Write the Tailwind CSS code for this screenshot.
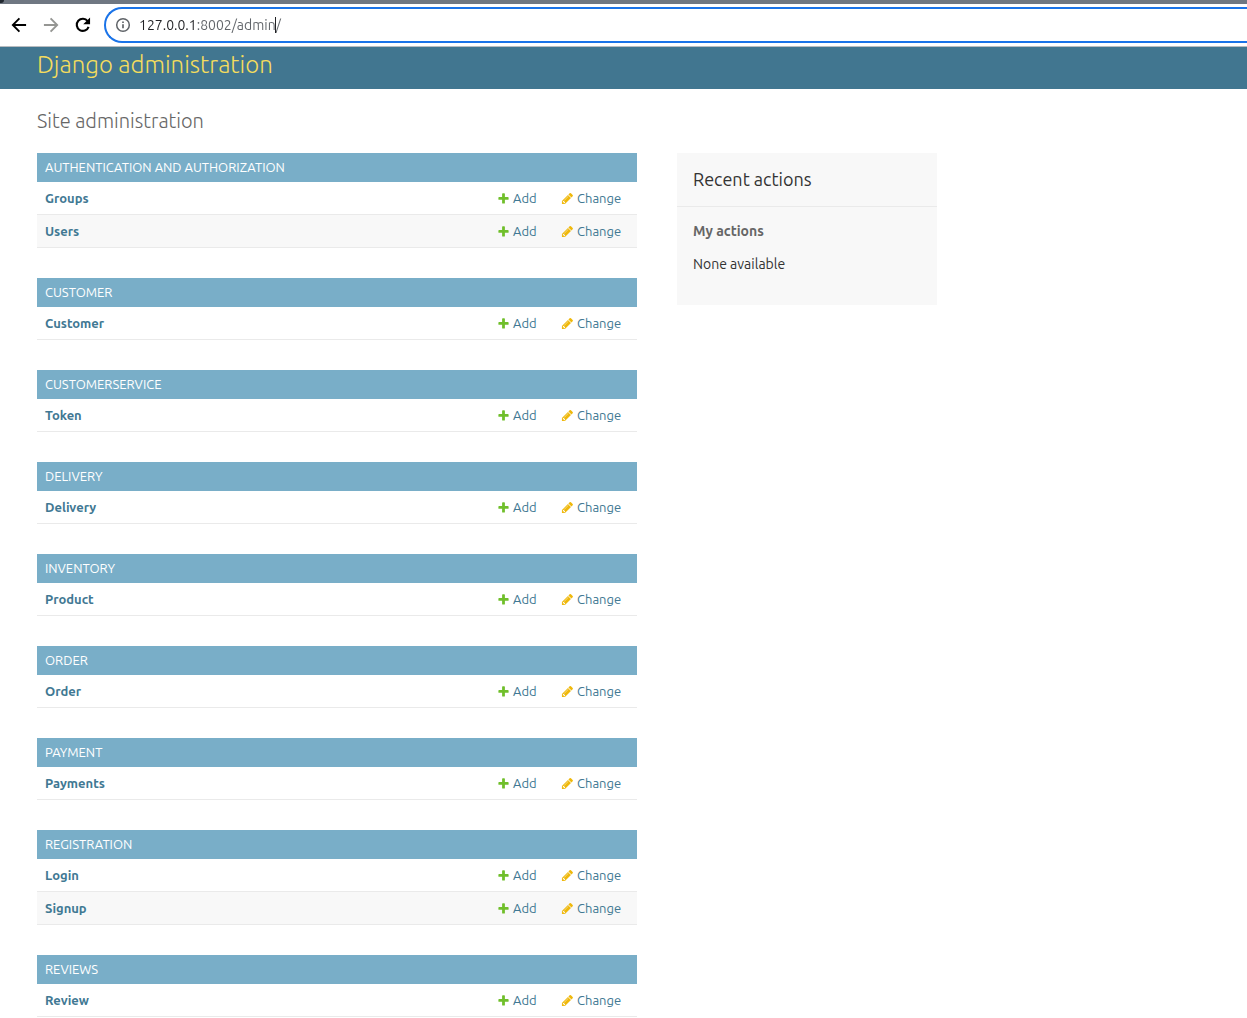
<!DOCTYPE html>
<html lang="en">
<head>
<meta charset="utf-8">
<title>Site administration | Django administration</title>
<meta name="viewport" content="width=device-width, initial-scale=1">
<script src="https://cdn.jsdelivr.net/npm/@tailwindcss/browser@4"></script>
</head>
<body class="min-h-screen bg-white font-['Ubuntu','Noto_Sans',sans-serif] text-sm text-[#333]">
<svg class="hidden" aria-hidden="true">
  <symbol id="add" viewBox="0 0 1792 1792"><path fill="#70bf2b" d="M1600 796v192q0 40-28 68t-68 28h-416v416q0 40-28 68t-68 28h-192q-40 0-68-28t-28-68v-416h-416q-40 0-68-28t-28-68v-192q0-40 28-68t68-28h416v-416q0-40 28-68t68-28h192q40 0 68 28t28 68v416h416q40 0 68 28t28 68z"/></symbol>
  <symbol id="change" viewBox="0 0 1792 1792"><path fill="#efb80b" d="M491 1536l91-91-235-235-91 91v107h128v128h107zm523-928q0-22-22-22-10 0-17 7l-542 542q-7 7-7 17 0 22 22 22 10 0 17-7l542-542q7-7 7-17zm-54-192l416 416-832 832h-416v-416zm683 96q0 53-37 90l-166 166-416-416 166-165q36-38 90-38 53 0 91 38l235 234q37 39 37 91z"/></symbol>
</svg>

<!-- Browser toolbar -->
<div class="relative border-t-4 border-b border-t-[#6f7782] border-b-[#b8bcc0] bg-white">
  <span class="absolute -top-1 left-0 h-[3px] w-1 rounded-br-full bg-[#20272f]" aria-hidden="true"></span>
  <div class="flex h-[42px] items-center pl-2">
    <button type="button" aria-label="Back" class="flex w-8 justify-start pl-px text-black"><svg class="size-5" viewBox="0 0 24 24" fill="currentColor"><path d="M20.500 10.800H7.400l5.900-5.900L11.700 3.200 3 12l8.700 8.800 1.600-1.700-5.900-5.900h13.100z"/></svg></button>
    <button type="button" aria-label="Forward" class="flex w-8 justify-start pl-px text-[#959693]"><svg class="size-5" viewBox="0 0 24 24" fill="currentColor"><path d="M3.500 10.800h13.100l-5.900-5.900 1.600-1.700L21 12l-8.700 8.800-1.600-1.700 5.900-5.900H3.500z"/></svg></button>
    <button type="button" aria-label="Reload" class="flex w-8 justify-start pl-px text-black"><svg class="size-5" viewBox="0 0 24 24" fill="none" stroke="currentColor" stroke-width="2.500"><path d="M18.700 14.200A7.300 7.300 0 1 1 17.600 7.300"/><path fill="currentColor" stroke="none" d="M20.500 3v8.200h-8.200z"/></svg></button>
    <div class="relative flex h-9 flex-1 items-center gap-2 rounded-l-full border-2 border-r-0 border-[#1a73e8] bg-white pl-[9px]">
      <svg class="size-4 shrink-0" viewBox="0 0 16 16" fill="none" stroke="#5f6368" stroke-width="1.500" aria-hidden="true"><circle cx="8" cy="8" r="6.300"/><path stroke-width="1.700" d="M8 7.200v4M8 4.500v1.600"/></svg>
      <input type="text" aria-label="Address" value="127.0.0.1:8002/admin/" class="h-6 w-full bg-[linear-gradient(to_right,#202124_58px,#5f6368_58px)] bg-clip-text text-sm text-transparent outline-none">
      <span class="absolute top-2 left-[169px] h-4 w-px bg-[#202124]" aria-hidden="true"></span>
    </div>
  </div>
</div>

<header class="flex h-[42px] items-start bg-[#417690] px-[37px]">
  <h1 class="text-2xl leading-9 font-light text-[#f5dd5d]"><a href="#">Django administration</a></h1>
</header>

<div class="px-[37px] pt-5">
  <h2 class="mb-5 text-xl leading-6 font-light text-[#666]">Site administration</h2>
  <div class="flex items-start gap-10">
    <main id="apps" class="flex max-w-[600px] flex-1 flex-col gap-[30px]"></main>
    <aside class="w-[260px] shrink-0 bg-[#f8f8f8] pb-[31px]">
      <h2 class="border-b border-[#eaeaea] px-4 pt-[13px] pb-[14px] text-lg leading-[26px]">Recent actions</h2>
      <div class="px-4 pt-[14px]">
        <h3 class="mb-[13px] leading-5 font-bold text-[#666]">My actions</h3>
        <p class="leading-5">None available</p>
      </div>
    </aside>
  </div>
</div>

<script>
const apps = [
  ['Authentication and Authorization', ['Groups', 'Users']],
  ['Customer', ['Customer']],
  ['Customerservice', ['Token']],
  ['Delivery', ['Delivery']],
  ['Inventory', ['Product']],
  ['Order', ['Order']],
  ['Payment', ['Payments']],
  ['Registration', ['Login', 'Signup']],
  ['Reviews', ['Review']],
];
const row = name => `
  <tr class="h-[33px] even:bg-[#f8f8f8]">
    <th scope="row" class="border-b border-[#eaeaea] p-0 pl-2 text-left font-bold"><a href="#">${name}</a></th>
    <td class="border-b border-[#eaeaea] p-0"><a href="#" class="flex items-center gap-[3px]"><svg class="size-[13px]" aria-hidden="true"><use href="#add"/></svg>Add</a></td>
    <td class="border-b border-[#eaeaea] p-0"><a href="#" class="flex items-center gap-[3px]"><svg class="size-[13px]" aria-hidden="true"><use href="#change"/></svg>Change</a></td>
  </tr>`;
document.getElementById('apps').innerHTML = apps.map(([app, models]) => `
  <table class="w-full table-fixed border-separate border-spacing-0 text-[13px] leading-4 text-[#417893]">
    <caption class="h-[29px] bg-[#79aec8] px-2 text-left leading-[29px] text-white uppercase"><a href="#">${app}</a></caption>
    <colgroup><col><col class="w-16"><col class="w-[76px]"></colgroup>
    <tbody>${models.map(row).join('')}</tbody>
  </table>`).join('');
</script>
</body>
</html>
